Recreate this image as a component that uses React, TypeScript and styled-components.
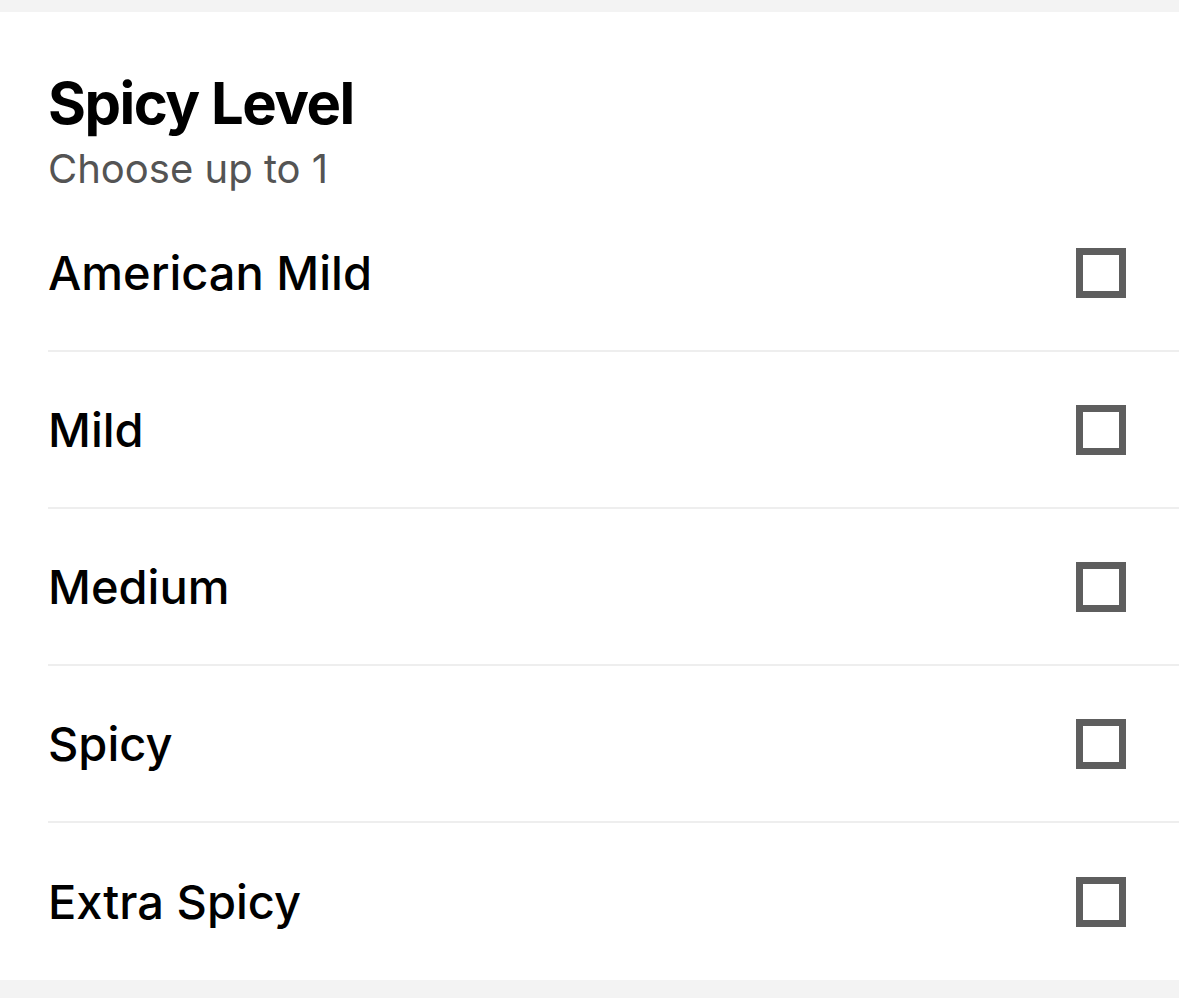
import React from "react";
import styled, { createGlobalStyle } from "styled-components";

const GlobalStyle = createGlobalStyle`
  html, body {
    margin: 0;
    padding: 0;
    background-color: #f3f3f3;
  }
`;

const Wrapper = styled.div`
  width: 1179px;
  height: 998px;
  background-color: #f3f3f3;
  padding-top: 12px;
  box-sizing: border-box;
  font-family: Inter, "Noto Sans", sans-serif;
`;

const Panel = styled.div`
  height: 968px;
  background-color: #ffffff;
  padding-left: 48px;
  box-sizing: border-box;
`;

const Header = styled.div`
  padding-top: 59px;
  height: 183px;
  box-sizing: border-box;
`;

const Title = styled.h1`
  margin: 0;
  font-size: 58px;
  line-height: 64px;
  font-weight: 700;
  letter-spacing: -1.5px;
  color: #000000;
`;

const Subtitle = styled.div`
  font-size: 40px;
  line-height: 46px;
  color: #545454;
  margin-top: 11px;
`;

const Row = styled.label<{ last?: boolean }>`
  display: flex;
  align-items: center;
  justify-content: space-between;
  height: ${(p) => (p.last ? "157px" : "155px")};
  padding-right: 53px;
  border-bottom: ${(p) => (p.last ? "none" : "2px solid #eeeeee")};
  cursor: pointer;
`;

const Label = styled.span`
  font-size: 47px;
  font-weight: 500;
  color: #000000;
`;

const Box = styled.span`
  width: 50px;
  height: 50px;
  box-sizing: border-box;
  border: 7px solid #5e5e5e;
`;

const options = ["American Mild", "Mild", "Medium", "Spicy", "Extra Spicy"];

const App = () => (
  <Wrapper>
    <GlobalStyle />
    <Panel>
      <Header>
        <Title>Spicy Level</Title>
        <Subtitle>Choose up to 1</Subtitle>
      </Header>
      {options.map((o, i) => (
        <Row key={o} last={i === options.length - 1}>
          <Label>{o}</Label>
          <Box />
        </Row>
      ))}
    </Panel>
  </Wrapper>
);

export default App;
